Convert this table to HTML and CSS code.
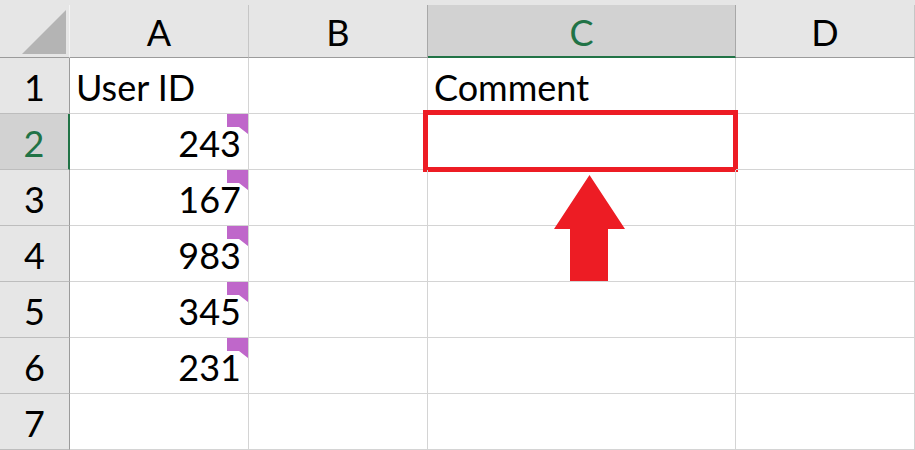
FILE: index.html
```html
<!DOCTYPE html>
<html>
<head>
<meta charset="utf-8">
<link rel="stylesheet" href="styles.css">
</head>
<body>
<div class="sheet">
  <div class="head">
    <div class="hcell corner">
      <svg class="corner-tri" width="44" height="44" viewBox="0 0 44 44"><polygon points="44,0 44,44 0,44" fill="#b4b4b4"/></svg>
    </div>
    <div class="hcell">A</div>
    <div class="hcell">B</div>
    <div class="hcell hsel">C</div>
    <div class="hcell">D</div>
  </div>
  <div class="body">
    <div class="rh">1</div>
    <div class="cell">User ID</div>
    <div class="cell"></div>
    <div class="cell">Comment</div>
    <div class="cell"></div>

    <div class="rh rsel">2</div>
    <div class="cell num">243<svg class="note" width="21" height="20" viewBox="0 0 21 20"><polygon points="0,0 21,0 21,20 12,13 0,13" fill="#bf67ca"/></svg></div>
    <div class="cell"></div>
    <div class="cell"><div class="redbox"></div></div>
    <div class="cell"></div>

    <div class="rh">3</div>
    <div class="cell num">167<svg class="note" width="21" height="20" viewBox="0 0 21 20"><polygon points="0,0 21,0 21,20 12,13 0,13" fill="#bf67ca"/></svg></div>
    <div class="cell"></div>
    <div class="cell"><svg class="arrow" width="71" height="107" viewBox="0 0 71 107"><polygon points="35.5,0 71,54 54,54 54,107 16,107 16,54 0,54" fill="#ed1c24"/></svg></div>
    <div class="cell"></div>

    <div class="rh">4</div>
    <div class="cell num">983<svg class="note" width="21" height="20" viewBox="0 0 21 20"><polygon points="0,0 21,0 21,20 12,13 0,13" fill="#bf67ca"/></svg></div>
    <div class="cell"></div>
    <div class="cell"></div>
    <div class="cell"></div>

    <div class="rh">5</div>
    <div class="cell num">345<svg class="note" width="21" height="20" viewBox="0 0 21 20"><polygon points="0,0 21,0 21,20 12,13 0,13" fill="#bf67ca"/></svg></div>
    <div class="cell"></div>
    <div class="cell"></div>
    <div class="cell"></div>

    <div class="rh">6</div>
    <div class="cell num">231<svg class="note" width="21" height="20" viewBox="0 0 21 20"><polygon points="0,0 21,0 21,20 12,13 0,13" fill="#bf67ca"/></svg></div>
    <div class="cell"></div>
    <div class="cell"></div>
    <div class="cell"></div>

    <div class="rh">7</div>
    <div class="cell"></div>
    <div class="cell"></div>
    <div class="cell"></div>
    <div class="cell"></div>
  </div>
</div>
</body>
</html>
```
FILE: styles.css
```css
* { box-sizing: border-box; }
html, body { margin: 0; padding: 0; background: #ffffff; }
body {
  width: 915px;
  height: 450px;
  overflow: hidden;
  font-family: Lato, "Open Sans", sans-serif;
  font-size: 36px;
  color: #000;
}
.sheet { display: flex; flex-direction: column; }
.head {
  display: grid;
  grid-template-columns: 70px 179px 179px 308px 1fr;
  height: 58px;
  padding-top: 5px;
  background: #e6e6e6;
}
.hcell {
  display: flex;
  align-items: center;
  justify-content: center;
  border-right: 1px solid #c6c6c6;
  border-bottom: 1px solid #9b9b9b;
  padding-top: 2px;
}
.hcell.corner {
  border-right-color: #f4f4f4;
  align-items: flex-end;
  justify-content: flex-end;
  padding: 0 3px 3px 0;
}
.corner-tri { display: block; }
.hcell:nth-child(3), .hcell:nth-child(4) { border-right-color: #a8a8a8; }
.hsel {
  background: #d2d2d2;
  color: #217346;
  border-bottom: 2px solid #217346;
}
.body {
  display: grid;
  grid-template-columns: 70px 179px 179px 308px 1fr;
  grid-auto-rows: 56px;
}
.rh {
  background: #e6e6e6;
  border-right: 1px solid #9b9b9b;
  border-bottom: 1px solid #bdbdbd;
  display: flex;
  align-items: flex-end;
  justify-content: center;
  padding-bottom: 4px;
}
.rh.rsel {
  background: #d2d2d2;
  color: #217346;
  border-right: 2px solid #217346;
}
.cell {
  position: relative;
  border-right: 1px solid #d4d4d4;
  border-bottom: 1px solid #d4d4d4;
  display: flex;
  align-items: flex-end;
  padding: 0 7px 4px 6px;
  white-space: nowrap;
}
.cell.num { justify-content: flex-end; }
.note { position: absolute; top: 0; right: 0; }
.redbox {
  position: absolute;
  left: -5px;
  top: -4px;
  width: 315px;
  height: 62px;
  border: 5px solid #ed1c24;
}
.arrow { position: absolute; left: 126px; top: 5px; }
```
